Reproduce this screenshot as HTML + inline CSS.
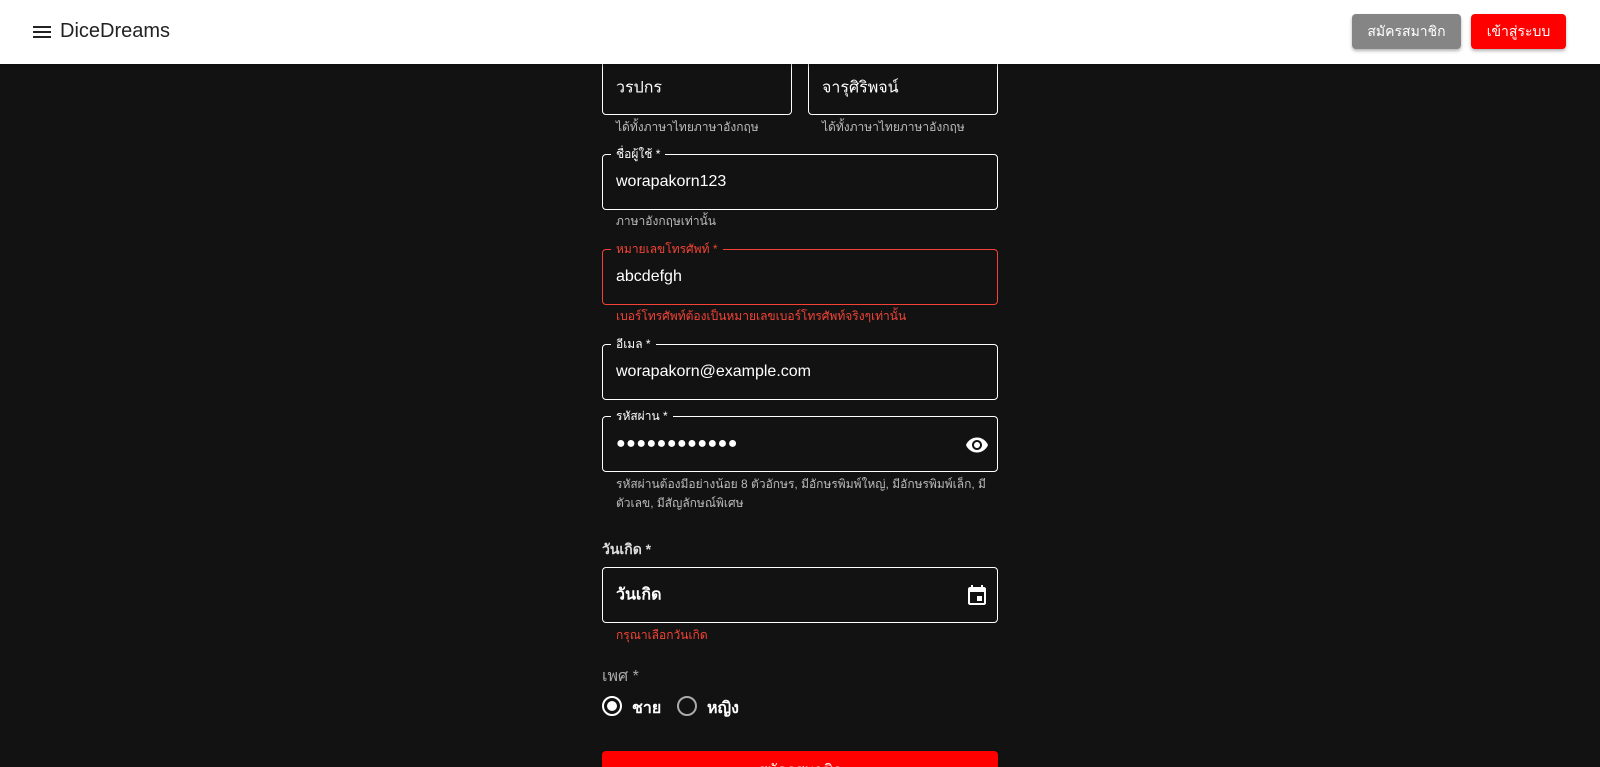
<!DOCTYPE html>
<html><head><meta charset="utf-8"><style>
*{box-sizing:border-box;margin:0;padding:0}
html,body{width:1600px;height:767px;overflow:hidden}
body{background:#121212;font-family:"Liberation Sans","Noto Sans CJK SC",sans-serif;color:#fff;position:relative}
.hdr{position:absolute;left:0;top:0;width:1600px;height:64px;background:#fff;box-shadow:0 2px 4px rgba(0,0,0,.3);z-index:5}
.box{position:absolute;border:1px solid #fff;border-radius:4px}
.box.err{border-color:#f44336}
.lbl{position:absolute;font-size:12px;background:#121212;padding:0 5px;top:-9px;left:8px;line-height:16px}
.val{position:absolute;left:13px;font-size:16px;top:50%;transform:translateY(-50%)}
.h{position:absolute;font-size:12px;color:#bbb;line-height:19px}
.red{color:#f44336}
.btn{position:absolute;top:14px;height:35px;border-radius:4px;color:#fff;font-size:14px;text-align:center;line-height:35px;box-shadow:0 2px 3px rgba(0,0,0,.3)}
</style></head><body>
<div class="hdr">
<svg style="position:absolute;left:30px;top:20px" width="24" height="24" viewBox="0 0 24 24"><path d="M3 18h18v-2H3v2zm0-5h18v-2H3v2zm0-7v2h18V6H3z" fill="#222"/></svg>
<div style="position:absolute;left:60px;top:20px;font-size:20px;color:#222">DiceDreams</div>
<div class="btn" style="left:1352px;width:109px;background:#858585">สมัครสมาชิก</div>
<div class="btn" style="left:1471px;width:95px;background:#f00">เข้าสู่ระบบ</div>
</div>

<div class="box" style="left:602px;top:30px;width:190px;height:85px"><div class="val" style="top:57px">วรปกร</div></div>
<div class="box" style="left:808px;top:30px;width:190px;height:85px"><div class="val" style="top:57px">จารุศิริพจน์</div></div>
<div class="h" style="left:616px;top:118px">ได้ทั้งภาษาไทยภาษาอังกฤษ</div>
<div class="h" style="left:822px;top:118px">ได้ทั้งภาษาไทยภาษาอังกฤษ</div>

<div class="box" style="left:602px;top:154px;width:396px;height:56px"><div class="lbl">ชื่อผู้ใช้ *</div><div class="val">worapakorn123</div></div>
<div class="h" style="left:616px;top:212px">ภาษาอังกฤษเท่านั้น</div>

<div class="box err" style="left:602px;top:249px;width:396px;height:56px"><div class="lbl red">หมายเลขโทรศัพท์ *</div><div class="val">abcdefgh</div></div>
<div class="h red" style="left:616px;top:307px">เบอร์โทรศัพท์ต้องเป็นหมายเลขเบอร์โทรศัพท์จริงๆเท่านั้น</div>

<div class="box" style="left:602px;top:344px;width:396px;height:56px"><div class="lbl">อีเมล *</div><div class="val">worapakorn@example.com</div></div>

<div class="box" style="left:602px;top:416px;width:396px;height:56px"><div class="lbl">รหัสผ่าน *</div><div class="val" style="letter-spacing:0.5px">●●●●●●●●●●●●</div>
<svg style="position:absolute;right:8px;top:16px" width="24" height="24" viewBox="0 0 24 24"><path fill="#fff" d="M12 4.5C7 4.5 2.73 7.61 1 12c1.73 4.39 6 7.5 11 7.5s9.270-3.11 11-7.5c-1.73-4.39-6-7.5-11-7.5zM12 17c-2.76 0-5-2.240-5-5s2.24-5 5-5 5 2.24 5 5-2.24 5-5 5zm0-8c-1.66 0-3 1.34-3 3s1.34 3 3 3 3-1.34 3-3-1.34-3-3-3z"/></svg></div>
<div class="h" style="left:616px;top:475px;width:380px">รหัสผ่านต้องมีอย่างน้อย 8 ตัวอักษร, มีอักษรพิมพ์ใหญ่, มีอักษรพิมพ์เล็ก, มีตัวเลข, มีสัญลักษณ์พิเศษ</div>

<div style="position:absolute;left:602px;top:539px;font-size:14px;color:#ddd;font-weight:bold">วันเกิด *</div>
<div class="box" style="left:602px;top:567px;width:396px;height:56px"><div class="val" style="font-weight:bold">วันเกิด</div>
<svg style="position:absolute;right:8px;top:16px" width="24" height="24" viewBox="0 0 24 24"><path fill="#fff" d="M17 12h-5v5h5v-5zM16 1v2H8V1H6v2H5c-1.11 0-1.99.9-1.99 2L3 19c0 1.1.89 2 2 2h14c1.1 0 2-.9 2-2V5c0-1.1-.9-2-2-2h-1V1h-2zm3 18H5V8h14v11z"/></svg></div>
<div class="h red" style="left:616px;top:626px">กรุณาเลือกวันเกิด</div>

<div style="position:absolute;left:602px;top:664px;font-size:16px;color:#aaa">เพศ *</div>
<div style="position:absolute;left:602px;top:696px;width:20px;height:20px;border:2px solid #fff;border-radius:50%"><div style="position:absolute;left:3px;top:3px;width:10px;height:10px;background:#fff;border-radius:50%"></div></div>
<div style="position:absolute;left:632px;top:696px;font-size:16px;font-weight:bold">ชาย</div>
<div style="position:absolute;left:677px;top:696px;width:20px;height:20px;border:2px solid #aaa;border-radius:50%"></div>
<div style="position:absolute;left:707px;top:696px;font-size:16px;font-weight:bold">หญิง</div>

<div style="position:absolute;left:602px;top:751px;width:396px;height:16px;background:#f00;border-radius:4px 4px 0 0;overflow:hidden;text-align:center;line-height:40px;font-size:15px">สมัครสมาชิก</div>
</body></html>
